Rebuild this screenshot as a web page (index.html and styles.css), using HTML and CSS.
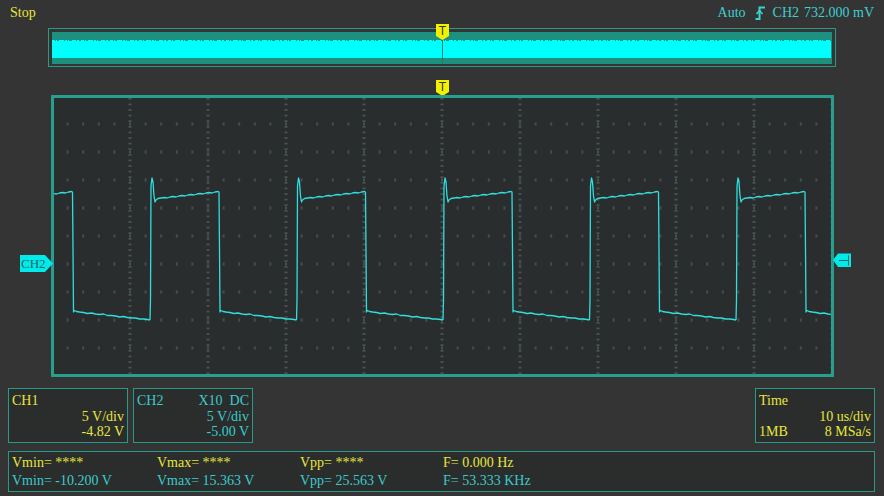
FILE: index.html
```html
<!DOCTYPE html>
<html>
<head>
<meta charset="utf-8">
<title>Scope</title>
<link rel="stylesheet" href="styles.css">
</head>
<body>
<div class="screen">
  <header class="status">
    <span class="stop">Stop</span>
    <div class="trig">
      <span class="auto">Auto</span>
      <svg class="edge" width="11" height="14" viewBox="0 0 11 14">
        <path d="M0.5 13 H4.5 V1.5 H10" fill="none" stroke="#3cd0d0" stroke-width="2"/>
        <path d="M1.5 8 L4.5 4.5 L7.5 8" fill="none" stroke="#3cd0d0" stroke-width="1.6"/>
      </svg>
      <span class="src">CH2</span>
      <span class="lvl">732.000 mV</span>
    </div>
  </header>

  <svg class="scope" width="884" height="358" viewBox="0 22 884 358">
    <defs>
      <pattern id="dots" patternUnits="userSpaceOnUse" x="44.2" y="82" width="15.6" height="28">
        <rect x="7.3" y="12.5" width="1" height="3" fill="#5f6f6d"/>
      </pattern>
      <pattern id="vlines" patternUnits="userSpaceOnUse" x="13" y="96" width="78" height="5.6">
        <rect x="37.5" y="2.3" width="3" height="1" fill="#5f6f6d"/>
      </pattern>
      <clipPath id="inner">
        <rect x="54" y="98" width="777" height="277"/>
      </clipPath>
      <polyline id="period" fill="none" stroke="#2fdede" stroke-width="1.3" stroke-linejoin="round"
        points="0,320 0.5,300 1,186 2,178 3,182 4,196 5,202 6,200 8,198.5 11,198 14,197.5 17,198 20,197 23,196.5 26,197 29,196 32,195.5 35,196 38,195 41,194.5 44,195 47,194 50,193.5 53,194 56,193 59,192.5 62,193 65,192 68,191.5 69,192 69.5,250 70,312 71,310.5 73,311.5 76,312 80,312.5 84,313.5 88,313 92,314 96,314.5 100,314 104,315.5 108,315.5 112,316 116,317 120,316.5 124,317.5 128,318 132,318 136,319 140,319 144,319.5 146.5,320"/>
    </defs>

    <!-- overview -->
    <rect x="48.5" y="28.5" width="787" height="38" fill="none" stroke="#2a9a88" stroke-width="1"/>
    <rect x="52" y="32" width="780" height="32" fill="#1e9080"/>
    <rect x="52" y="41" width="779" height="17" fill="#00ffff"/>
    <line x1="52" y1="40.5" x2="831" y2="40.5" stroke="#00ffff" stroke-width="1" stroke-dasharray="3 1 1 2 5 1 2 1 1 3 4 1 2 2"/>
    <line x1="442.5" y1="32" x2="442.5" y2="64" stroke="#1a7e70" stroke-width="1"/>

    <!-- trigger markers -->
    <polygon points="436,24 449,24 449,36 442.5,40 436,36" fill="#f2f200"/>
    <text class="tmark" x="442.5" y="35">T</text>
    <polygon points="436,80 449,80 449,92 442.5,96 436,92" fill="#f2f200"/>
    <text class="tmark" x="442.5" y="91">T</text>

    <!-- main plot -->
    <rect x="52.5" y="96.5" width="780" height="279" fill="#2a2d2d" stroke="#24a08c" stroke-width="3"/>
    <rect x="54" y="98" width="777" height="277" fill="url(#vlines)"/>
    <rect x="54" y="98" width="777" height="277" fill="url(#dots)"/>

    <g clip-path="url(#inner)">
      <use href="#period" x="3.5"/>
      <use href="#period" x="150"/>
      <use href="#period" x="296.5"/>
      <use href="#period" x="443"/>
      <use href="#period" x="589.5"/>
      <use href="#period" x="736"/>
    </g>

    <!-- channel ground marker -->
    <polygon points="20,255 45,255 53,263.5 45,272 20,272" fill="#00eaea"/>
    <text class="chmark" x="21" y="268">CH2</text>

    <!-- trigger level marker -->
    <polygon points="833,260 838,253.5 851,253.5 851,267 838,267" fill="#00eaea"/>
    <path d="M839 260.5 H848 M848.5 255.5 V265.5" fill="none" stroke="#1f6464" stroke-width="1"/>
  </svg>

  <div class="panels">
    <div class="box yellow">
      <div class="row"><span>CH1</span></div>
      <div class="row right"><span>5 V/div</span></div>
      <div class="row right"><span>-4.82 V</span></div>
    </div>
    <div class="box cyan">
      <div class="row split"><span>CH2</span><span class="pre">X10  DC</span></div>
      <div class="row right"><span>5 V/div</span></div>
      <div class="row right"><span>-5.00 V</span></div>
    </div>
    <div class="box yellow timebox">
      <div class="row"><span>Time</span></div>
      <div class="row right"><span>10 us/div</span></div>
      <div class="row split"><span>1MB</span><span>8 MSa/s</span></div>
    </div>
  </div>

  <div class="meas">
    <span class="y">Vmin= ****</span>
    <span class="y">Vmax= ****</span>
    <span class="y">Vpp= ****</span>
    <span class="y">F= 0.000 Hz</span>
    <span class="c">Vmin= -10.200 V</span>
    <span class="c">Vmax= 15.363 V</span>
    <span class="c">Vpp= 25.563 V</span>
    <span class="c">F= 53.333 KHz</span>
  </div>
</div>
</body>
</html>
```

FILE: styles.css
```css
html, body {
  margin: 0;
  padding: 0;
  background: #343434;
}

.screen {
  width: 884px;
  height: 496px;
  overflow: hidden;
  background: #343434;
  font-family: "Liberation Serif", "Times New Roman", serif;
  font-size: 14px;
  line-height: 15px;
}

.status {
  height: 22px;
  box-sizing: border-box;
  padding: 5px 10px 0 10px;
  display: flex;
  justify-content: space-between;
  align-items: flex-start;
  line-height: 16px;
}

.stop {
  color: #e6e63c;
}

.trig {
  display: flex;
  align-items: flex-start;
  color: #3cd0d0;
}

.edge {
  margin: 1px 7px 0 9px;
  display: block;
}

.src {
  margin-right: 5px;
}

.scope {
  display: block;
}

.tmark {
  font-family: "Liberation Sans", Arial, sans-serif;
  font-size: 12px;
  fill: #333333;
  text-anchor: middle;
}

.chmark {
  font-family: "Liberation Serif", "Times New Roman", serif;
  font-size: 13px;
  fill: #1c6868;
}

.panels {
  display: flex;
  gap: 5px;
  margin-top: 8px;
  padding: 0 9px 0 8px;
}

.box {
  width: 120px;
  height: 55px;
  box-sizing: border-box;
  border: 1px solid #2a9a88;
  background: #2b2d2d;
  padding: 4px 3px 0 3px;
  line-height: 15.5px;
}

.timebox {
  margin-left: auto;
}

.yellow {
  color: #e6e63c;
}

.cyan {
  color: #38cccc;
}

.row {
  display: flex;
}

.row.right {
  justify-content: flex-end;
}

.row.split {
  justify-content: space-between;
}

.pre {
  white-space: pre;
}

.meas {
  margin: 8px 9px 0 8px;
  height: 41px;
  box-sizing: border-box;
  border: 1px solid #2a9a88;
  background: #2b2d2d;
  padding: 3px 3px 0 3px;
  display: grid;
  grid-template-columns: 145px 143px 143px auto;
  line-height: 15px;
  white-space: nowrap;
}

.meas .y {
  color: #e6e63c;
}

.meas .c {
  color: #38cccc;
}
```
